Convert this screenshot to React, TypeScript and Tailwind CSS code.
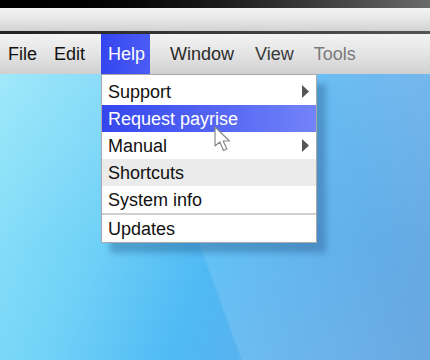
import React from 'react';

type MenuItem = {
  label: string;
  submenu?: boolean;
  active?: boolean;
  hover?: boolean;
  divider?: boolean;
};

const items: MenuItem[] = [
  { label: 'Support', submenu: true },
  { label: 'Request payrise', active: true },
  { label: 'Manual', submenu: true },
  { label: 'Shortcuts', hover: true },
  { label: 'System info' },
  { label: 'Updates', divider: true },
];

const Arrow: React.FC = () => (
  <svg width="7" height="13" viewBox="0 0 7 13" className="mr-[7px]">
    <path d="M0 0 L7 6.5 L0 13 Z" fill="#555" />
  </svg>
);

const Cursor: React.FC = () => (
  <svg width="20" height="28" viewBox="0 0 20 28" className="absolute left-[214px] top-[126px]">
    <path
      d="M1 1 L1 20 L5.8 16 L9.5 24.5 L12.8 23 L9.2 15 L15.5 15 Z"
      fill="#fff"
      stroke="#8a8a8a"
      strokeWidth="1.2"
      strokeLinejoin="round"
    />
  </svg>
);

const DropMenu: React.FC = () => (
  <div className="absolute left-[101px] top-[74px] w-[216px] bg-white border border-[#a9a9a9] shadow-[9px_10px_6px_rgba(20,60,110,0.3)] pt-[3px]">
    {items.map((it) => (
      <div key={it.label}>
        {it.divider && <div className="h-[2px] bg-[#cfcfcf]" />}
        <div
          className={`h-[27px] flex items-center justify-between pl-[6px] text-[18px] leading-none ${
            it.active
              ? 'bg-gradient-to-r from-[#3546ee] via-[#5263f3] to-[#7383f8] text-white'
              : it.hover
              ? 'bg-[#ebebeb] text-[#111]'
              : 'text-[#111]'
          }`}
        >
          <span>{it.label}</span>
          {it.submenu && <Arrow />}
        </div>
      </div>
    ))}
  </div>
);

export default function App() {
  return (
    <div
      className="w-[430px] h-[360px] relative overflow-hidden flex flex-col"
      style={{ fontFamily: '"Liberation Sans", Arial, sans-serif' }}
    >
      <div className="h-[8px] bg-gradient-to-r from-[#000] via-[#1a1a1a] to-[#6a6a6a]" />
      <div className="h-[23px] bg-gradient-to-b from-[#f4f4f4] via-[#e6e6e6] to-[#d2d2d2]" />
      <div className="h-[3px] bg-gradient-to-r from-[#222] to-[#555]" />
      <div className="h-[40px] flex items-stretch bg-gradient-to-b from-[#f3f3f3] via-[#e4e4e4] to-[#d0d0d0] text-[18px]">
        <span className="ml-[8px] self-center text-[#111]">File</span>
        <span className="ml-[17px] self-center text-[#111]">Edit</span>
        <span className="ml-[16px] w-[49px] pl-[7px] flex items-center text-white bg-gradient-to-r from-[#3445ef] to-[#4b5cf4]">
          Help
        </span>
        <span className="ml-[20px] self-center text-[#2a2a2a]">Window</span>
        <span className="ml-[21px] self-center text-[#3a3a3a]">View</span>
        <span className="ml-[20px] self-center text-[#7a7a7a]">Tools</span>
      </div>
      <div className="flex-1 relative bg-[linear-gradient(110deg,#92e6f9_0%,#6fd0f7_30%,#4fb9f4_52%,#5cb0ee_70%,#6aa8e0_100%)]">
        <div className="absolute inset-0 bg-[linear-gradient(70deg,transparent_45%,rgba(255,255,255,0.12)_45.5%,transparent_80%)]" />
        <div className="absolute inset-0 bg-[linear-gradient(180deg,rgba(255,255,255,0.12),transparent_60%)]" />
      </div>
      <DropMenu />
      <Cursor />
    </div>
  );
}
